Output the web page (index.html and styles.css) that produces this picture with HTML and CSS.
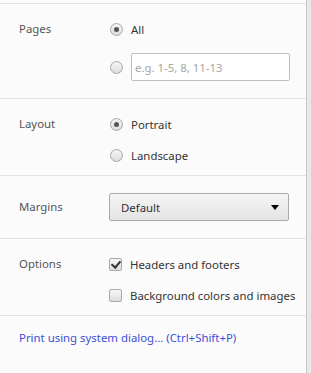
FILE: index.html
```html
<!DOCTYPE html>
<html lang="en">
<head>
  <meta charset="UTF-8">
  <meta name="viewport" content="width=device-width, initial-scale=1.0">
  <title>Print</title>
  <link rel="stylesheet" href="styles.css">
</head>
<body>

  <div class="panel">
    <!-- Pages -->
    <div class="section pages">
      <div class="label">Pages</div>
      <div class="controls">
        <div class="row"><span class="radio checked"></span><span class="text">All</span></div>
        <div class="row row-input"><span class="radio"></span><input type="text" class="page-range" placeholder="e.g. 1-5, 8, 11-13"></div>
      </div>
    </div>

    <!-- Layout -->
    <div class="section">
      <div class="label">Layout</div>
      <div class="controls">
        <div class="row"><span class="radio checked"></span><span class="text">Portrait</span></div>
        <div class="row"><span class="radio"></span><span class="text">Landscape</span></div>
      </div>
    </div>

    <!-- Margins -->
    <div class="section margins">
      <div class="label">Margins</div>
      <div class="controls">
        <div class="select"><span>Default</span><span class="arrow"></span></div>
      </div>
    </div>

    <!-- Options -->
    <div class="section">
      <div class="label">Options</div>
      <div class="controls">
        <div class="row"><span class="checkbox checked"></span><span class="text">Headers and footers</span></div>
        <div class="row"><span class="checkbox"></span><span class="text">Background colors and images</span></div>
      </div>
    </div>

    <div class="link-row">
      <a href="#" class="sys-link">Print using system dialog... (Ctrl+Shift+P)</a>
    </div>
  </div>

</body>
</html>
```

FILE: styles.css
```css
body {
  margin: 0;
  background: #e9e9e9;
  font-family: "Noto Sans", Arial, sans-serif;
  font-size: 11.4px;
  color: #333;
}
.panel {
  width: 307px;
  height: 373px;
  background: #fbfbfb;
  border-right: 1px solid #c8c8c8;
  padding-top: 3px;
  box-sizing: border-box;
}
.section {
  display: flex;
  border-top: 1px solid #e4e4e4;
  padding: 15px 0 10px;
}
.section.pages {
  padding-bottom: 17px;
}
.section.margins {
  padding: 17px 0 17px;
}
.label {
  width: 90px;
  padding-left: 19px;
  color: #555;
  line-height: 20px;
}
.section.margins .label {
  line-height: 28px;
}
.controls {
  display: flex;
  flex-direction: column;
  gap: 11px;
}
.pages .controls {
  gap: 14px;
}
.row {
  display: flex;
  align-items: center;
  height: 20px;
}
.row-input {
  height: 28px;
}
.text {
  margin-left: 8px;
}
.radio {
  width: 11px;
  height: 11px;
  margin-left: 1px;
  border: 1px solid #a9a9a9;
  border-radius: 50%;
  background: linear-gradient(#f4f4f4, #dcdcdc);
  position: relative;
}
.radio.checked::after {
  content: "";
  position: absolute;
  left: 3px;
  top: 3px;
  width: 5px;
  height: 5px;
  border-radius: 50%;
  background: #555;
}
.checkbox {
  width: 11px;
  height: 11px;
  border: 1px solid #a9a9a9;
  border-radius: 2px;
  background: linear-gradient(#f6f6f6, #dedede);
  position: relative;
}
.checkbox.checked::after {
  content: "";
  position: absolute;
  left: 3px;
  top: 0px;
  width: 4px;
  height: 7px;
  border: solid #333;
  border-width: 0 2px 2px 0;
  transform: rotate(40deg);
}
.page-range {
  margin-left: 8px;
  width: 159px;
  height: 28px;
  box-sizing: border-box;
  border: 1px solid #bfbfbf;
  border-radius: 2px;
  background: #fff;
  padding: 0 3px;
  font-family: inherit;
  font-size: 11.4px;
  color: #333;
}
.page-range::placeholder {
  color: #a6a6a6;
}
.select {
  display: flex;
  align-items: center;
  justify-content: space-between;
  width: 180px;
  height: 28px;
  box-sizing: border-box;
  padding: 0 9px 0 11px;
  border: 1px solid #aaa;
  border-radius: 2px;
  background: linear-gradient(#f5f5f5, #e4e4e4);
}
.arrow {
  width: 0;
  height: 0;
  border-left: 4px solid transparent;
  border-right: 4px solid transparent;
  border-top: 5px solid #000;
}
.link-row {
  border-top: 1px solid #e4e4e4;
  padding: 14px 19px;
}
.sys-link {
  color: #3b4fd6;
  text-decoration: none;
}
```
